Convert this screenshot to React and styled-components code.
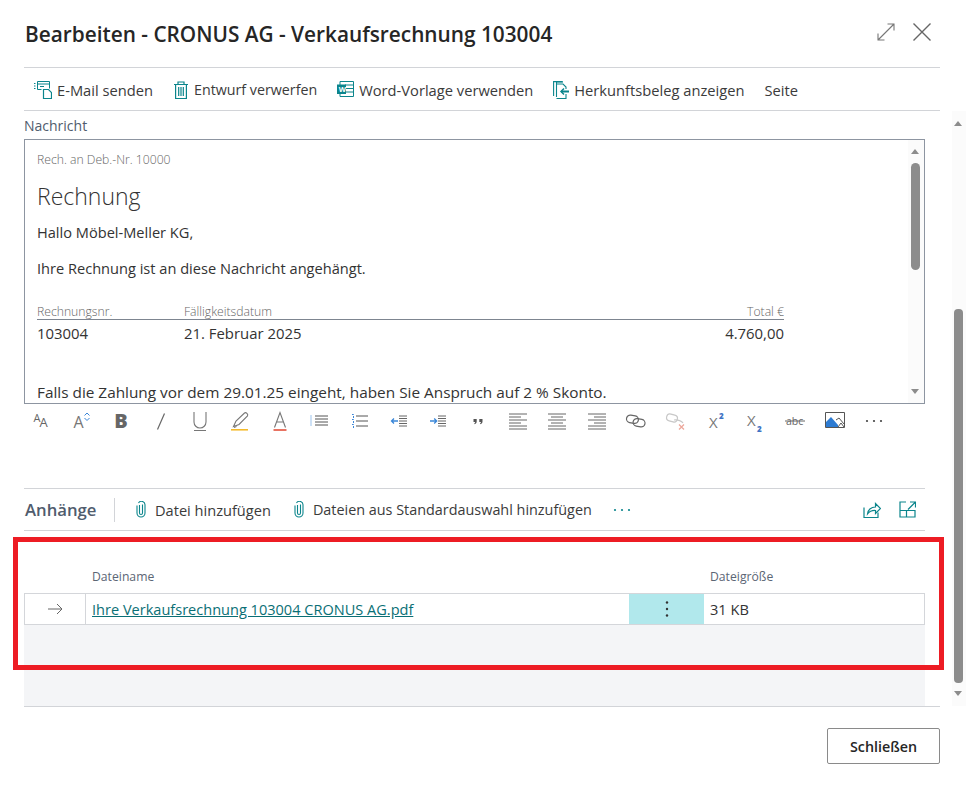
import React from "react";
import styled, { createGlobalStyle } from "styled-components";

const Global = createGlobalStyle`
  html, body { margin: 0; padding: 0; background: #fff; }
  body { font-family: "Open Sans", "Noto Sans", "Liberation Sans", sans-serif; color: #212121; }
  * { box-sizing: border-box; }
`;

const TEAL = "#0b858c";
const GREY = "#666";

const Page = styled.div`
  position: relative;
  width: 966px;
  height: 790px;
  overflow: hidden;
  display: flex;
  flex-direction: column;
  background: #fff;
`;
const Header = styled.header`
  height: 68px;
  margin: 0 26px 0 24px;
  border-bottom: 1px solid #d2d4d8;
  display: flex;
  align-items: center;
  justify-content: space-between;
  flex: none;
`;
const Title = styled.h1`
  margin: 1px 0 0 1px;
  font-size: 20.8px;
  line-height: 28px;
  font-weight: 600;
  color: #262626;
`;
const WindowButtons = styled.div`
  display: flex;
  align-items: center;
  gap: 17px;
  margin: 0 8px 4px 0;
`;
const CommandBar = styled.nav`
  height: 43px;
  margin: 0 26px 0 24px;
  padding: 2px 0 0 10px;
  border-bottom: 1px solid #d2d4d8;
  display: flex;
  align-items: center;
  gap: 20px;
  flex: none;
`;
const Command = styled.div`
  display: flex;
  align-items: center;
  gap: 5px;
  color: #3b3b3b;
  white-space: nowrap;
`;
const CommandLabel = styled.span`
  font-size: ${p => p.$size || 14.7}px;
  line-height: 20px;
`;
const ScrollArea = styled.div`
  height: 595px;
  display: flex;
  flex: none;
`;
const Content = styled.main`
  width: 952px;
  padding: 0 27px 0 24px;
  flex: none;
`;
const FieldLabel = styled.div`
  margin-top: 6px;
  font-size: 14px;
  line-height: 18px;
  color: #505c6d;
`;
const Editor = styled.div`
  position: relative;
  height: 265px;
  margin-top: 4px;
  border: 1px solid #8d95a1;
  overflow: hidden;
  padding: 11px 0 0 12px;
`;
const Small = styled.div`
  font-size: 12.2px;
  line-height: 18px;
  font-weight: 300;
  color: #666;
`;
const MailHeading = styled.div`
  margin-top: 12px;
  font-size: 23px;
  line-height: 30px;
  font-weight: 300;
  color: #333;
`;
const MailText = styled.div`
  margin-top: ${p => p.$top}px;
  font-size: ${p => p.$size || 14.6}px;
  line-height: 20px;
  color: #333;
  white-space: nowrap;
`;
const MailHeadRow = styled.div`
  width: 747px;
  margin-top: 25px;
  height: 17px;
  padding-top: 1px;
  border-bottom: 1px solid #7d8590;
  display: grid;
  grid-template-columns: 147px 1fr auto;
  font-size: 12.2px;
  line-height: 15px;
  font-weight: 300;
  color: #666;
`;
const MailValueRow = styled.div`
  width: 747px;
  margin-top: 3px;
  display: grid;
  grid-template-columns: 147px 1fr auto;
  font-size: 14.9px;
  line-height: 20px;
  color: #333;
`;
const Bar = styled.div`
  position: absolute;
  top: 0;
  right: 0;
  bottom: 0;
  width: 16px;
  background: #fbfbfb;
`;
const Thumb = styled.div`
  position: absolute;
  left: 3px;
  top: 23px;
  width: 9px;
  height: 107px;
  border-radius: 5px;
  background: #8c8c8c;
`;
const Arrow = styled.div`
  position: absolute;
  left: ${p => p.$left}px;
  ${p => (p.$down ? `bottom: ${p.$off}px; border-top: 5px solid #8c8c8c;` : `top: ${p.$off}px; border-bottom: 5px solid #8c8c8c;`)}
  border-left: 4.5px solid transparent;
  border-right: 4.5px solid transparent;
  width: 0;
  height: 0;
`;
const FormatBar = styled.div`
  display: flex;
  height: 24px;
  margin: 5px 0 0 -2px;
`;
const FormatItem = styled.div`
  width: 39.65px;
  height: 24px;
  display: flex;
  align-items: center;
  justify-content: center;
  flex: none;
`;
const BoldLetter = styled.span`
  font-size: 20px;
  font-weight: 800;
  line-height: 24px;
  color: ${GREY};
`;
const AttachBar = styled.section`
  margin-top: 55px;
  height: 43px;
  border-top: 1px solid #d2d4d8;
  border-bottom: 1px solid #d2d4d8;
  display: flex;
  align-items: center;
`;
const AttachTitle = styled.div`
  width: 91px;
  padding-left: 1px;
  font-size: 16.7px;
  font-weight: 600;
  line-height: 24px;
  color: #505c6d;
  border-right: 1px solid #d2d4d8;
`;
const AttachActions = styled.div`
  display: flex;
  align-items: center;
  gap: 23px;
  margin-left: 21px;
`;
const AttachAction = styled(Command)`
  gap: 9px;
`;
const MoreActions = styled.div`
  display: flex;
  margin-left: -2px;
`;
const Spacer = styled.div`
  flex: 1;
`;
const AttachIcons = styled.div`
  display: flex;
  align-items: center;
  gap: 18px;
  margin-right: 9px;
`;
const ColumnHead = styled.div`
  display: grid;
  grid-template-columns: 68px 618px 1fr;
  margin-top: 38px;
  height: 16px;
  font-size: 12.2px;
  line-height: 16px;
  color: #5c6675;
`;
const Row = styled.div`
  display: grid;
  grid-template-columns: 61px 543px 75px 1fr;
  height: 32px;
  margin-top: 8px;
  border: 1px solid #d4d6da;
`;
const ArrowCell = styled.div`
  display: flex;
  align-items: center;
  justify-content: center;
  border-right: 1px solid #d4d6da;
`;
const LinkCell = styled.div`
  padding-left: 6px;
  font-size: 14.55px;
  line-height: 30px;
`;
const FileLink = styled.a`
  color: #0a6f75;
  text-decoration: underline;
`;
const MenuCell = styled.div`
  background: #b1e8ec;
  display: flex;
  align-items: center;
  justify-content: center;
`;
const SizeCell = styled.div`
  padding-left: 6px;
  font-size: 14.6px;
  line-height: 30px;
  color: #333;
`;
const EmptyRows = styled.div`
  height: 81px;
  background: #f4f5f7;
`;
const OuterBar = styled.aside`
  position: relative;
  width: 14px;
  background: #fbfbfb;
  flex: none;
`;
const OuterThumb = styled.div`
  position: absolute;
  left: 2px;
  top: 198px;
  width: 9px;
  height: 374px;
  border-radius: 4px;
  background: #8c8c8c;
`;
const Footer = styled.footer`
  margin: 0 26px 0 24px;
  border-top: 1px solid #d2d4d8;
  padding-top: 21px;
  display: flex;
  justify-content: flex-end;
`;
const CloseButton = styled.button`
  width: 113px;
  height: 36px;
  background: #fff;
  border: 1px solid #8a8a8a;
  border-radius: 2px;
  font-family: inherit;
  font-size: 14.3px;
  font-weight: 600;
  color: #262626;
`;
const Highlight = styled.div`
  position: absolute;
  left: 13px;
  top: 537px;
  width: 931px;
  height: 133px;
  border: 5px solid #ed1c24;
  pointer-events: none;
`;
const GlyphText = styled.text`
  font-family: "Open Sans", sans-serif;
  font-size: ${p => p.$size}px;
  font-weight: ${p => p.$weight || 400};
  fill: ${p => p.$fill || GREY};
  stroke: none;
`;

const Svg = ({ w = 24, h = 24, children, stroke = GREY, sw = 1 }) => (
  <svg width={w} height={h} viewBox={`0 0 ${w} ${h}`} fill="none" stroke={stroke} strokeWidth={sw} aria-hidden="true">
    {children}
  </svg>
);

const ExpandIcon = () => (
  <Svg w={18} h={18} stroke="#777" sw={1.1}>
    <path d="M1 17 17 1M10.500 1H17V7.500M1 10.500V17H7.500" />
  </Svg>
);
const CloseIcon = () => (
  <Svg w={20} h={20} stroke="#666" sw={1.4}>
    <path d="M1.500 1.500 18.500 18.500M18.500 1.500 1.500 18.500" />
  </Svg>
);
const MailIcon = () => (
  <Svg w={18} h={18} stroke={TEAL}>
    <path d="M0 2.500h2M0 5h2M0 7.500h2" strokeDasharray="1.500 .5" />
    <path d="M3.500.5h12v7M3.500.5v8h4M3.500 3h12M6 5.500h4" />
    <path d="M9.500 8.500h5l3 3v6h-8z" strokeWidth="1.200" />
  </Svg>
);
const TrashIcon = () => (
  <Svg w={16} h={18} stroke={TEAL} sw={1.2}>
    <path d="M1 3.500h14M5 3V1h6v2M2.600 3.500v14h10.800v-14" />
    <path d="M5.700 6v9M8 6v9M10.300 6v9" />
  </Svg>
);
const WordIcon = () => (
  <Svg w={17} h={18} stroke={TEAL}>
    <path d="M3 .5h13.500v15H3z" />
    <path d="M8 4h8M8 7.500h8M8 11h8" />
    <rect x=".5" y="4" width="8" height="8.500" fill={TEAL} />
    <GlyphText x="1.800" y="11.200" $size={7.500} $weight={700} $fill="#fff">W</GlyphText>
  </Svg>
);
const SourceIcon = () => (
  <Svg w={16} h={18} stroke={TEAL} sw={1.1}>
    <path d="M3.500 16V1H10" />
    <path d="M.6 15V.6h9" />
    <path d="M3.500 17.500H13V13M3.500 3H10l3 3v2" />
    <path d="M8 10.500h8" strokeWidth="2" />
    <path d="M11 7.500 8 10.500l3 3" strokeWidth="1.500" />
  </Svg>
);
const ClipIcon = () => (
  <svg width="10" height="17" viewBox="0 0 10 17" fill="none" stroke={TEAL} strokeWidth="1.100" aria-hidden="true">
    <path d="M3.500 4v8a1.500 1.500 0 0 0 3 0V3.500" />
    <path d="M1 4.500V12a4 4 0 0 0 8 0V4a3.500 3.500 0 0 0-6.500-2" />
  </svg>
);
const DotsIcon = ({ color }) => (
  <svg width="18" height="4" viewBox="0 0 18 4" fill={color} aria-hidden="true">
    <circle cx="2" cy="2" r="1.100" />
    <circle cx="9" cy="2" r="1.100" />
    <circle cx="16" cy="2" r="1.100" />
  </svg>
);
const ShareIcon = () => (
  <Svg w={18} h={18} stroke={TEAL} sw={1.200}>
    <path d="M1 6.500v10h14v-5" />
    <path d="M4.500 13c.3-4 3.500-7 8-7V2.500l5 5-5 5V9.500c-3.500-.3-6 1-8 3.500z" />
  </Svg>
);
const OpenIcon = () => (
  <Svg w={17} h={17} stroke={TEAL} sw={1.200}>
    <path d="M7 1H1v15h15V9.500H1M7.500 16V9.500" />
    <path d="M9 8.500 16 1.500M11 1h5.500v5.500" />
  </Svg>
);
const lines = (xs) => xs.map(([x1, x2, y], i) => <path key={i} d={`M${x1} ${y}H${x2}`} />);

const formatIcons = [
  <Svg><GlyphText x="3.500" y="13" $size={11}>A</GlyphText><GlyphText x="9.500" y="18" $size={13}>A</GlyphText></Svg>,
  <Svg><GlyphText x="4.500" y="19" $size={16} $fill="#777">A</GlyphText><path d="M15.500 6.500 18 4l2.500 2.500M15.500 9 18 11.500 20.500 9" stroke="#3a86d8" /></Svg>,
  <BoldLetter>B</BoldLetter>,
  <Svg sw={1.200}><path d="M15.500 4.500 8.500 20.500" /></Svg>,
  <Svg sw={1.100} stroke="#777"><path d="M6 3v10a6 6 0 0 0 12 0V3M6 21.500h12" /></Svg>,
  <Svg sw={1.100} stroke="#777"><path d="M5.500 17.500 8 12 16.500 4c1.500-1 4 1 3 3l-8.500 8.500z" /><path d="M6 18.500l2.500-1" /><path d="M3 20.800h17" stroke="#f4b71f" strokeWidth="1.500" /></Svg>,
  <Svg sw={1.100} stroke="#777"><path d="M6.500 18.500 12 3.500l5.500 15M8.500 13h7" /><path d="M5.500 21h13" stroke="#e0442e" strokeWidth="1.500" /></Svg>,
  <Svg stroke="#555">{lines([[8, 21, 7], [8, 21, 10], [8, 21, 13], [8, 21, 16]])}<path d="M4 6.500V17" stroke="#3a86d8" strokeDasharray="1 1" /></Svg>,
  <Svg stroke="#555">{lines([[9, 21, 7], [9, 21, 12], [9, 21, 17]])}<path d="M5 5.500h1.500v4M5 10.500h1.500v4M5 15.500h1.500v3.500" stroke="#3a86d8" strokeDasharray="2 1" /></Svg>,
  <Svg stroke="#666">{lines([[12, 20, 7], [12, 20, 9.500], [12, 20, 12], [12, 20, 14.500], [12, 20, 17]])}<path d="M11 12H4.500M7 9.500 4.500 12 7 14.500" stroke="#3a86d8" strokeWidth="1.300" /></Svg>,
  <Svg stroke="#666">{lines([[12, 20, 7], [12, 20, 9.500], [12, 20, 12], [12, 20, 14.500], [12, 20, 17]])}<path d="M4 12h6.500M8.200 9.500l2.500 2.500-2.500 2.500" stroke="#3a86d8" strokeWidth="1.300" /></Svg>,
  <Svg stroke="none"><path d="M7.500 10h3.200v2.500c0 1.500-.8 2.300-2 2.700l-.5-.8c.7-.3 1-.7 1-1.400H7.500zM13.300 10h3.200v2.500c0 1.500-.8 2.300-2 2.700l-.5-.8c.7-.3 1-.7 1-1.400h-1.700z" fill="#555" /></Svg>,
  <Svg stroke="#666">{lines([[3, 21, 5], [3, 15, 8], [3, 21, 11], [3, 15, 14], [3, 21, 17], [3, 21, 20]])}</Svg>,
  <Svg stroke="#666">{lines([[3, 21, 5], [6, 18, 8], [3, 21, 11], [6, 18, 14], [3, 21, 17], [3, 21, 20]])}</Svg>,
  <Svg stroke="#666">{lines([[3, 21, 5], [9, 21, 8], [3, 21, 11], [9, 21, 14], [3, 21, 17], [3, 21, 20]])}</Svg>,
  <Svg sw={1.200}><rect x="2.500" y="6.500" width="12" height="7.500" rx="3.750" transform="rotate(10 8.500 10)" /><rect x="9" y="10" width="12" height="7.500" rx="3.750" transform="rotate(10 15 14)" /></Svg>,
  <Svg stroke="#c8c8c8" sw={1.200}><rect x="2.500" y="5.500" width="11" height="7" rx="3.500" transform="rotate(15 8 9)" /><path d="M10 11c4-.5 8 1 9 3" /><path d="M15 15.500l5 5M20 15.500l-5 5" stroke="#eda89c" strokeWidth="1.300" /></Svg>,
  <Svg stroke="none"><GlyphText x="5" y="19" $size={15} $fill="#777">X</GlyphText><GlyphText x="15" y="10" $size={8} $weight={800} $fill="#3f74c4">2</GlyphText></Svg>,
  <Svg stroke="none"><GlyphText x="4" y="17" $size={15} $fill="#777">X</GlyphText><GlyphText x="14" y="23" $size={8} $weight={800} $fill="#3f74c4">2</GlyphText></Svg>,
  <Svg sw={1}><GlyphText x="3" y="15.500" $size={10.500}>abc</GlyphText><path d="M2 12h20" /></Svg>,
  <Svg stroke="#555"><path d="M2.500 3.500h19v15h-19z" /><path d="M3 18V13l5-5 7 8v2z" fill="#2d7bd2" stroke="none" /><path d="M13 11l3-2 5 6M15 18l3-4 3 4" /></Svg>,
  <svg width="18" height="4" viewBox="0 0 18 4" fill="#444" aria-hidden="true"><circle cx="2" cy="2" r="1.100" /><circle cx="9" cy="2" r="1.100" /><circle cx="16" cy="2" r="1.100" /></svg>,
];

export default function App() {
  return (
    <Page>
      <Global />
      <Header>
        <Title>Bearbeiten - CRONUS AG - Verkaufsrechnung 103004</Title>
        <WindowButtons>
          <ExpandIcon />
          <CloseIcon />
        </WindowButtons>
      </Header>
      <CommandBar>
        <Command><MailIcon /><CommandLabel>E-Mail senden</CommandLabel></Command>
        <Command><TrashIcon /><CommandLabel $size={14.25}>Entwurf verwerfen</CommandLabel></Command>
        <Command><WordIcon /><CommandLabel>Word-Vorlage verwenden</CommandLabel></Command>
        <Command><SourceIcon /><CommandLabel>Herkunftsbeleg anzeigen</CommandLabel></Command>
        <Command><CommandLabel>Seite</CommandLabel></Command>
      </CommandBar>
      <ScrollArea>
        <Content>
          <FieldLabel>Nachricht</FieldLabel>
          <Editor>
            <Small>Rech. an Deb.-Nr. 10000</Small>
            <MailHeading>Rechnung</MailHeading>
            <MailText $top={11}>Hallo Möbel-Meller KG,</MailText>
            <MailText $top={16}>Ihre Rechnung ist an diese Nachricht angehängt.</MailText>
            <MailHeadRow>
              <span>Rechnungsnr.</span>
              <span>Fälligkeitsdatum</span>
              <span>Total €</span>
            </MailHeadRow>
            <MailValueRow>
              <span>103004</span>
              <span>21. Februar 2025</span>
              <span>4.760,00</span>
            </MailValueRow>
            <MailText $top={39} $size={15.35}>Falls die Zahlung vor dem 29.01.25 eingeht, haben Sie Anspruch auf 2 % Skonto.</MailText>
            <Bar>
              <Arrow $left={3} $off={9} />
              <Thumb />
              <Arrow $left={3} $down $off={9} />
            </Bar>
          </Editor>
          <FormatBar>
            {formatIcons.map((icon, i) => <FormatItem key={i}>{icon}</FormatItem>)}
          </FormatBar>
          <AttachBar>
            <AttachTitle>Anhänge</AttachTitle>
            <AttachActions>
              <AttachAction><ClipIcon /><CommandLabel $size={14.6}>Datei hinzufügen</CommandLabel></AttachAction>
              <AttachAction><ClipIcon /><CommandLabel $size={14.4}>Dateien aus Standardauswahl hinzufügen</CommandLabel></AttachAction>
              <MoreActions><DotsIcon color={TEAL} /></MoreActions>
            </AttachActions>
            <Spacer />
            <AttachIcons>
              <ShareIcon />
              <OpenIcon />
            </AttachIcons>
          </AttachBar>
          <ColumnHead>
            <span />
            <span>Dateiname</span>
            <span>Dateigröße</span>
          </ColumnHead>
          <Row>
            <ArrowCell>
              <Svg w={16} h={12} stroke="#666"><path d="M1 6h14M10 1l5 5-5 5" /></Svg>
            </ArrowCell>
            <LinkCell><FileLink href="#">Ihre Verkaufsrechnung 103004 CRONUS AG.pdf</FileLink></LinkCell>
            <MenuCell>
              <svg width="4" height="18" viewBox="0 0 4 18" fill="#333" aria-hidden="true"><circle cx="2" cy="2.500" r="1.200" /><circle cx="2" cy="9" r="1.200" /><circle cx="2" cy="15.500" r="1.200" /></svg>
            </MenuCell>
            <SizeCell>31 KB</SizeCell>
          </Row>
          <EmptyRows />
        </Content>
        <OuterBar>
          <Arrow $left={2} $off={10} />
          <OuterThumb />
          <Arrow $left={2} $down $off={10} />
        </OuterBar>
      </ScrollArea>
      <Footer>
        <CloseButton>Schließen</CloseButton>
      </Footer>
      <Highlight />
    </Page>
  );
}
